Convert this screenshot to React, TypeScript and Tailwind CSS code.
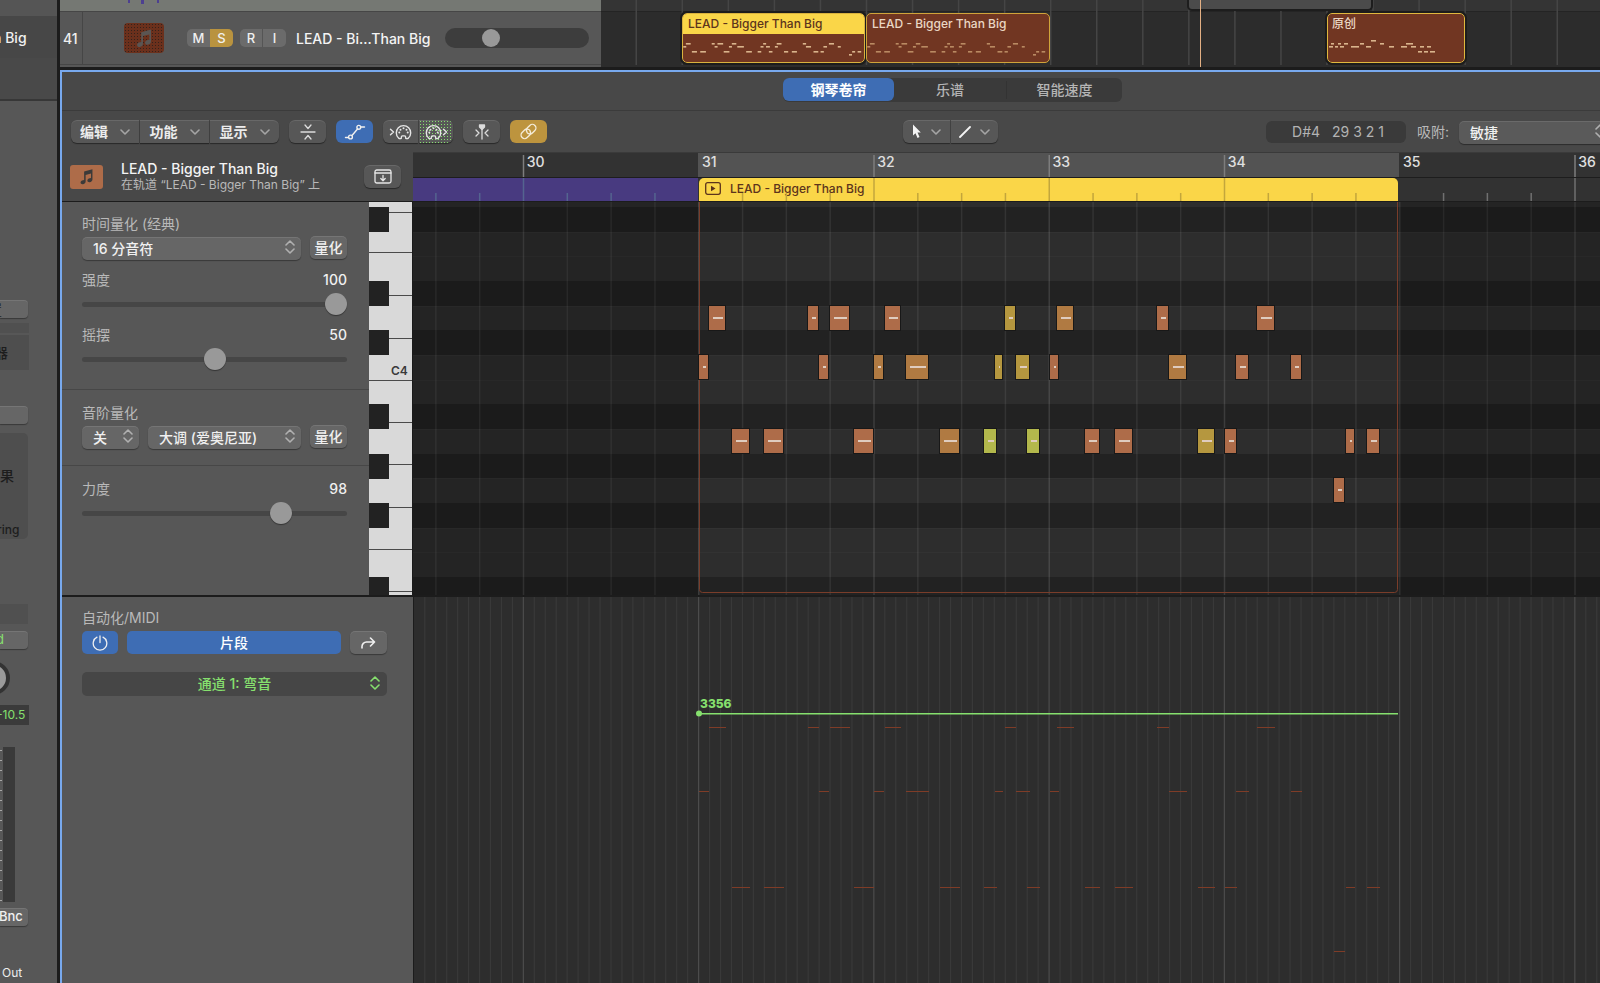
import React from 'react';

const BAR = 175.25;
const BEAT = BAR / 4;
const REGION_X = 285;
const REGION_W = 701;

type Note = { x: number; w: number; row: 0 | 1 | 2 | 3; tone?: 'amber' | 'gold' | 'lime' };

const NOTES: Note[] = [
  { x: 11, w: 16, row: 0 },
  { x: 110, w: 10, row: 0 },
  { x: 132, w: 19, row: 0 },
  { x: 187, w: 15, row: 0 },
  { x: 307, w: 10, row: 0, tone: 'gold' },
  { x: 359, w: 16, row: 0, tone: 'amber' },
  { x: 459, w: 11, row: 0 },
  { x: 559, w: 17, row: 0 },
  { x: 1, w: 9, row: 1 },
  { x: 121, w: 9, row: 1 },
  { x: 176, w: 9, row: 1, tone: 'amber' },
  { x: 208, w: 22, row: 1, tone: 'amber' },
  { x: 297, w: 7, row: 1, tone: 'gold' },
  { x: 318, w: 13, row: 1, tone: 'gold' },
  { x: 352, w: 8, row: 1 },
  { x: 471, w: 17, row: 1, tone: 'amber' },
  { x: 538, w: 12, row: 1 },
  { x: 593, w: 10, row: 1 },
  { x: 34, w: 17, row: 2 },
  { x: 66, w: 19, row: 2 },
  { x: 156, w: 19, row: 2 },
  { x: 242, w: 19, row: 2, tone: 'amber' },
  { x: 286, w: 12, row: 2, tone: 'lime' },
  { x: 329, w: 12, row: 2, tone: 'lime' },
  { x: 387, w: 14, row: 2 },
  { x: 417, w: 17, row: 2 },
  { x: 500, w: 16, row: 2, tone: 'gold' },
  { x: 527, w: 11, row: 2 },
  { x: 648, w: 8, row: 2 },
  { x: 669, w: 12, row: 2 },
  { x: 636, w: 10, row: 3 },
];

const NOTE_TOP = [104, 153, 227, 276];
const AUTO_Y = [130, 194, 290, 354];
const MINI_Y = [29, 32, 37, 40];
const TONES = { base: '#ae6c49', amber: '#b07a42', gold: '#b5973f', lime: '#b3b84c' };

const ORIGINAL: [number, number, number][] = [
  [4, 3, 29], [11, 3, 29], [17, 4, 29], [33, 4, 29], [53, 4, 29], [79, 7, 29], [44, 5, 26],
  [2, 4, 32], [8, 3, 32], [13, 4, 32], [24, 8, 32], [39, 5, 32], [62, 5, 32], [74, 6, 32],
  [84, 5, 32], [93, 4, 32], [100, 4, 32], [91, 4, 37], [97, 4, 37], [103, 5, 37],
];

// true marks a sharp, from the top of the roll down
const ROWS = [true, false, false, true, false, true, false, false, true, false, true, false, true, false, false, true];
const rowY = (i: number) => Math.round(5 + i * 24.67);

function Chevron({ className = '' }: { className?: string }) {
  return (
    <svg viewBox="0 0 10 6" className={`h-[6px] w-[10px] ${className}`} fill="none" stroke="currentColor" strokeWidth="1.6" strokeLinecap="round" strokeLinejoin="round" aria-hidden="true">
      <path d="M1 1l4 4 4-4" />
    </svg>
  );
}

function UpDown({ className = '' }: { className?: string }) {
  return (
    <svg viewBox="0 0 10 14" className={`pointer-events-none absolute h-[14px] w-[10px] ${className}`} fill="none" stroke="currentColor" strokeWidth="1.6" strokeLinecap="round" strokeLinejoin="round" aria-hidden="true">
      <path d="M1 5l4-4 4 4M1 9l4 4 4-4" />
    </svg>
  );
}

function MusicNote({ className = '' }: { className?: string }) {
  return (
    <svg viewBox="0 0 20 20" className={className} fill="currentColor" aria-hidden="true">
      <path d="M7.2 4.2L17 1.4v12.1c0 1.7-1.5 3-3.2 3.2-1.600.2-2.800-.7-2.800-2 0-1.400 1.300-2.500 2.900-2.700l1.400-.2V6.400L9 8.100v7.700c0 1.700-1.500 3-3.200 3.200-1.600.2-2.800-.7-2.800-2 0-1.400 1.300-2.500 2.900-2.700l1.300-.2z" />
    </svg>
  );
}

function MidiPlug({ out = false }: { out?: boolean }) {
  return (
    <svg viewBox="0 0 24 18" className={out ? 'h-[18px] w-[24px] -scale-x-100' : 'h-[18px] w-[24px]'} fill="none" stroke="#e6e6e6" strokeWidth="1.4" strokeLinecap="round" strokeLinejoin="round" aria-hidden="true">
      <path d={out ? 'M4.500 6.200L1.500 9l3 2.800' : 'M1.500 6.200L4.500 9l-3 2.800'} />
      <path d="M12.300 15.300c-.9.500-1.900.4-2.700-.2A7.200 7.200 0 1 1 19.400 15.100c-.8.600-1.800.7-2.700.2v-1.100c0-.8-.5-1.300-1.200-1.300h-2c-.7 0-1.200.5-1.200 1.300z" />
      <g fill="#e6e6e6" stroke="none">
        <circle cx="10.300" cy="9.600" r="1" />
        <circle cx="11.500" cy="6.700" r="1" />
        <circle cx="14.500" cy="5.300" r="1" />
        <circle cx="17.500" cy="6.700" r="1" />
        <circle cx="18.700" cy="9.600" r="1" />
      </g>
    </svg>
  );
}

const GREY_BTN = 'flex shrink-0 items-center justify-center bg-[#575757] shadow-[0_1px_1px_rgba(0,0,0,0.45),inset_0_1px_0_rgba(255,255,255,0.1)]';
const PANEL_BTN = 'bg-[#666666] shadow-[0_1px_1px_rgba(0,0,0,0.35),inset_0_1px_0_rgba(255,255,255,0.1)]';

function MenuButton({ label, className = '' }: { label: string; className?: string }) {
  return (
    <button type="button" className={`${GREY_BTN} h-[23px] gap-3 text-[14px] font-bold text-[#ececec] ${className}`}>
      {label}
      <Chevron className="text-[#a5a5a5]" />
    </button>
  );
}

function Select({ label, value, className, tone }: { label: string; value: string; className: string; tone?: string }) {
  return (
    <div className={`relative ${className}`}>
      <select
        aria-label={label}
        defaultValue={value}
        className={`h-[23px] w-full appearance-none rounded-[5px] pl-[11px] text-[14px] font-medium text-[#f0f0f0] outline-none ${tone ?? PANEL_BTN}`}
      >
        <option>{value}</option>
      </select>
      <UpDown className="right-[6px] top-[4px] text-[#b0b0b0]" />
    </div>
  );
}

function Slider({ id, label, value, display, max }: { id: string; label: string; value: number; display: string; max: number }) {
  return (
    <div>
      <div className="flex h-5 items-center justify-between text-[14px]">
        <label htmlFor={id} className="text-[#b9b9b9]">{label}</label>
        <output className="text-[14px] font-medium text-[#f0f0f0]">{display}</output>
      </div>
      <input
        id={id}
        type="range"
        min={0}
        max={max}
        defaultValue={value}
        className="mt-1 block h-[22px] w-full appearance-none bg-transparent [&::-webkit-slider-runnable-track]:h-[5px] [&::-webkit-slider-runnable-track]:rounded-full [&::-webkit-slider-runnable-track]:bg-[#464646] [&::-webkit-slider-thumb]:-mt-[9px] [&::-webkit-slider-thumb]:h-[22px] [&::-webkit-slider-thumb]:w-[22px] [&::-webkit-slider-thumb]:appearance-none [&::-webkit-slider-thumb]:rounded-full [&::-webkit-slider-thumb]:bg-[#999999] [&::-webkit-slider-thumb]:shadow-[0_1px_1px_rgba(0,0,0,0.4)]"
      />
    </div>
  );
}

function ChannelStrip() {
  return (
    <aside className="flex w-[57px] shrink-0 flex-col overflow-hidden bg-[#575757] text-[14px]">
      <div className="h-4 bg-[#555555]" />
      <div className="flex h-[42px] items-center bg-[#474747]">
        <span className="-ml-[7px] whitespace-pre text-[14px] font-medium text-[#f0f0f0]">n Big</span>
      </div>
      <div className="h-[43px] border-b-2 border-[#373737] bg-[#494949]" />
      <div className="flex w-[29px] flex-col">
        <button type="button" className={`mt-[199px] flex h-[18px] w-7 items-center justify-start rounded-r-[4px] text-[#222] ${PANEL_BTN}`}>
          <span className="-ml-[12px]">置</span>
        </button>
        <div className="mt-[5px] h-[10px] bg-[#505050]" />
        <div className="mt-[2px] flex h-[35px] items-center bg-[#4e4e4e] text-[#1d1d1d]">
          <span className="-ml-[6px] font-medium">器</span>
        </div>
        <button type="button" aria-label="Slot" className={`mt-[36px] h-[18px] w-7 rounded-r-[4px] ${PANEL_BTN}`} />
        <div className="mt-[9px] flex h-[106px] w-7 flex-col justify-between rounded-r-[5px] bg-[#4e4e4e] pt-[33px] text-[#1d1d1d]">
          <span className="-ml-[14px] w-8 whitespace-nowrap font-medium leading-5">效果</span>
          <span className="-ml-[3px] text-[12px] font-medium leading-[18px]">ring</span>
        </div>
        <div className="mt-[65px] h-[20px] w-7 bg-[#505050]" />
        <button type="button" className={`mt-[7px] flex h-[18px] w-7 items-center rounded-r-[4px] text-[13px] text-[#86e06e] ${PANEL_BTN}`}>
          <span className="-ml-[4px]">d</span>
        </button>
        <svg viewBox="0 0 29 36" className="mt-[11px] h-[36px] w-[29px]" aria-hidden="true">
          <circle cx="-7" cy="18" r="15" fill="#9a9a9a" stroke="#333333" strokeWidth="4" />
        </svg>
        <div className="mt-[9px] flex h-[20px] items-center bg-[#3b3b3b] text-[12px] text-[#86e06e]">
          <span className="-ml-[3px]">-10.5</span>
        </div>
        <div className="mt-[22px] flex h-[155px]">
          <svg className="h-full w-[3px]" aria-hidden="true">
            {Array.from({ length: 16 }, (_, i) => (
              <rect key={i} x="0" y={3 + i * 10} width="2" height="1" fill="#a8a8a8" />
            ))}
          </svg>
          <div className="w-3 bg-[#3a3a3a]" />
        </div>
        <button type="button" className={`mt-[6px] flex h-[18px] w-7 items-center rounded-r-[4px] text-[13px] font-medium text-[#f0f0f0] ${PANEL_BTN}`}>
          <span className="-ml-px">Bnc</span>
        </button>
        <span className="ml-[2px] mt-[37px] text-[12px] leading-5 text-[#ececec]">Out</span>
      </div>
    </aside>
  );
}

function MiniNotes({ dim = false }: { dim?: boolean }) {
  return (
    <svg className="pointer-events-none absolute inset-0 h-full w-full" aria-hidden="true">
      {NOTES.map((n, i) => (
        <rect key={i} x={n.x * 0.261} y={MINI_Y[n.row]} width={Math.max(3, n.w * 0.3)} height="1.600" fill={dim ? '#b98a62' : '#d9b48c'} />
      ))}
    </svg>
  );
}

function Tracks() {
  return (
    <section className="flex h-[67px]">
      <div className="w-[541px] shrink-0 bg-[#575757]">
        <div className="h-3 border-b border-[#464646] bg-[#757873]">
          <svg className="h-[4px] w-[160px]" fill="#4d4090" aria-hidden="true">
            <rect x="68" width="2" height="3" />
            <rect x="81" width="3" height="4" />
            <rect x="97" width="2" height="3" />
          </svg>
        </div>
        <div className="flex h-[53px] items-center border-b border-[#464646]">
          <div className="flex h-full w-[23px] items-center border-r border-[#464646] pl-[3px] text-[14px] font-medium text-[#f0f0f0]">
            41
          </div>
          <div className="ml-[41px] flex h-[30px] w-10 items-center justify-center rounded-[4px] bg-[#6b301c] bg-[radial-gradient(#33221c_0.7px,transparent_0.9px)] bg-[size:3px_3px]">
            <MusicNote className="h-[20px] w-[20px] text-[#5a5553]" />
          </div>
          <div className="ml-[23px] flex overflow-hidden rounded-[5px] text-[13px] font-medium text-[#f0f0f0]">
            <button type="button" className="h-[18px] w-[23px] bg-[#6b6b6b]">M</button>
            <button type="button" className="h-[18px] w-[23px] bg-[#b9933f]">S</button>
          </div>
          <div className="ml-[7px] flex overflow-hidden rounded-[5px] text-[13px] font-medium text-[#f0f0f0]">
            <button type="button" className="h-[18px] w-[23px] border-r border-[#555555] bg-[#6b6b6b]">R</button>
            <button type="button" className="h-[18px] w-[23px] bg-[#6b6b6b]">I</button>
          </div>
          <span className="ml-[10px] w-[138px] whitespace-nowrap text-[14px] font-medium text-[#f4f4f4]">LEAD - Bi…Than Big</span>
          <input
            type="range"
            aria-label="音量"
            min={0}
            max={100}
            defaultValue={29}
            className="ml-[11px] h-5 w-[144px] appearance-none rounded-full bg-[#3d3d3d] px-px [&::-webkit-slider-thumb]:h-[18px] [&::-webkit-slider-thumb]:w-[18px] [&::-webkit-slider-thumb]:appearance-none [&::-webkit-slider-thumb]:rounded-full [&::-webkit-slider-thumb]:bg-[#999999]"
          />
        </div>
      </div>
      <div className="relative flex-1 overflow-hidden bg-[#2c2c2c]">
        <div className="h-3 border-b border-[#242424] bg-[#343434]" />
        <svg className="absolute inset-0 h-[65px] w-full" aria-hidden="true">
          {Array.from({ length: 24 }, (_, i) => (
            <rect key={i} x={34.500 + i * 46.050} y="0" width="1.500" height="65" fill="#454545" />
          ))}
        </svg>
        <div className="absolute left-[586px] top-0 h-[11px] w-[186px] rounded-b-[5px] border-2 border-t-0 border-[#1d1d1d] bg-[#4b4b4b]" />
        <div className="absolute left-[81px] top-[13px] h-[50px] w-[183px] overflow-hidden rounded-[5px] border border-[#d9b23e] bg-[#713622] outline-2 outline-[#1c1c1c]">
          <div className="flex h-5 items-center bg-[#fad648] pl-[5px] text-[12px] font-medium text-[#5c341c]">LEAD - Bigger Than Big</div>
          <MiniNotes />
        </div>
        <div className="absolute left-[265px] top-[13px] h-[50px] w-[184px] overflow-hidden rounded-[5px] border border-[#d0a43a] bg-[#713622]">
          <div className="flex h-5 items-center pl-[5px] text-[12px] font-medium text-[#ead6c4]">LEAD - Bigger Than Big</div>
          <MiniNotes dim />
        </div>
        <div className="absolute left-[726px] top-[13px] h-[50px] w-[138px] overflow-hidden rounded-[5px] border border-[#e0b83e] bg-[#713622] outline-2 outline-[#1c1c1c]">
          <div className="flex h-5 items-center pl-[4px] text-[12px] font-medium text-[#ead6c4]">原创</div>
          <svg className="pointer-events-none absolute inset-0 h-full w-full" aria-hidden="true">
            {ORIGINAL.map(([x, w, y], i) => (
              <rect key={i} x={x - 1} y={y} width={w} height="1.600" fill="#d9b48c" />
            ))}
          </svg>
        </div>
        <div className="absolute left-[599px] top-0 h-full w-px bg-[#e3b084]" />
      </div>
    </section>
  );
}

function Toolbar() {
  return (
    <div className="flex h-[41px] shrink-0 items-center pl-[9px]">
      <div className="flex gap-px">
        <MenuButton label="编辑" className="w-[68px] rounded-l-[6px]" />
        <MenuButton label="功能" className="w-[69px]" />
        <MenuButton label="显示" className="w-[69px] rounded-r-[6px]" />
      </div>
      <button type="button" aria-label="Collapse" className={`${GREY_BTN} ml-[10px] h-[23px] w-[37px] rounded-[6px]`}>
        <svg viewBox="0 0 18 18" className="h-[18px] w-[18px]" fill="none" stroke="#dcdcdc" strokeWidth="1.300" strokeLinecap="round" strokeLinejoin="round">
          <path d="M2 9h14M6 2l3 3.500L12 2M6 16l3-3.500L12 16" />
        </svg>
      </button>
      <button type="button" aria-label="Automation" className="ml-[10px] flex h-[23px] w-[37px] shrink-0 items-center justify-center rounded-[6px] bg-[#3e6db4]">
        <svg viewBox="0 0 22 16" className="h-[16px] w-[22px]" fill="none" stroke="#f0f0f0" strokeWidth="1.400" strokeLinecap="round">
          <path d="M1.500 13.500h3M8 11.500l5.500-6.500M16.500 3h4" />
          <circle cx="6.500" cy="13" r="1.900" />
          <circle cx="14.800" cy="3.300" r="1.900" />
        </svg>
      </button>
      <div className="ml-[10px] flex shrink-0 gap-px">
        <button type="button" aria-label="MIDI in" className={`${GREY_BTN} h-[23px] w-[35px] rounded-l-[6px]`}>
          <MidiPlug />
        </button>
        <button type="button" aria-label="MIDI out" className={`${GREY_BTN} h-[23px] w-[34px] rounded-r-[6px] bg-[radial-gradient(#86e06e_0.6px,transparent_0.9px)] bg-[size:3px_3px]`}>
          <MidiPlug out />
        </button>
      </div>
      <button type="button" aria-label="Catch playhead" className={`${GREY_BTN} ml-[10px] h-[23px] w-[37px] rounded-[6px]`}>
        <svg viewBox="0 0 18 18" className="h-[18px] w-[18px]" fill="none" stroke="#dcdcdc" strokeWidth="1.300" strokeLinecap="round" strokeLinejoin="round">
          <path d="M3 7l3 3-3 3M15 7l-3 3 3 3M9 5v11" />
          <path d="M6.500 2h5v2L9 6.500 6.500 4z" fill="#dcdcdc" />
        </svg>
      </button>
      <button type="button" aria-label="Link" className="ml-[10px] flex h-[23px] w-[37px] shrink-0 items-center justify-center rounded-[6px] bg-[#bd943e]">
        <svg viewBox="0 0 24 24" className="h-[17px] w-[17px]" fill="none" stroke="#f4ecd9" strokeWidth="1.900" strokeLinecap="round" strokeLinejoin="round">
          <path d="M10 13.500a5 5 0 0 0 7.500.5l3.500-3.500a5 5 0 0 0-7.100-7.100l-3.400 3.400a5 5 0 0 0-.6 6.200" />
          <path d="M14 10.500a5 5 0 0 0-7.500-.5L3 13.500a5 5 0 0 0 7.100 7.100l3.400-3.400a5 5 0 0 0 .6-6.200" />
        </svg>
      </button>
      <div className="ml-[356px] flex shrink-0 gap-px">
        <button type="button" aria-label="Pointer tool" className={`${GREY_BTN} h-[23px] w-[47px] gap-[9px] rounded-l-[6px]`}>
          <svg viewBox="0 0 10 15" className="h-[15px] w-[10px]" fill="#f4f4f4">
            <path d="M1 0.500v11l2.500-2.300L5.500 14l2-.9-2-4.600h3.300z" />
          </svg>
          <Chevron className="text-[#a5a5a5]" />
        </button>
        <button type="button" aria-label="Pencil tool" className={`${GREY_BTN} h-[23px] w-[47px] gap-[9px] rounded-r-[6px]`}>
          <svg viewBox="0 0 12 12" className="h-[12px] w-[12px]" stroke="#f4f4f4" strokeWidth="1.800" strokeLinecap="round">
            <path d="M1 11L11 1" />
          </svg>
          <Chevron className="text-[#a5a5a5]" />
        </button>
      </div>
      <div className="ml-[268px] flex h-[22px] w-[140px] shrink-0 items-center justify-center gap-[12px] rounded-[6px] bg-[#3a3a3a] pl-1 text-[14px] text-[#b3b3b3]">
        <span>D#4</span>
        <span>29 3 2 1</span>
      </div>
      <span className="ml-[11px] w-[42px] shrink-0 text-[14px] text-[#b9b9b9]">吸附:</span>
      <Select
        label="吸附"
        value="敏捷"
        className="w-[152px] shrink-0"
        tone="bg-[#5a5a5a] shadow-[0_1px_1px_rgba(0,0,0,0.4),inset_0_1px_0_rgba(255,255,255,0.1)]"
      />
    </div>
  );
}

function Ruler() {
  return (
    <div className="relative h-[49px] flex-1 overflow-hidden border-t border-[#3a3a3a] bg-[#323232]">
      <div className="absolute left-[285px] top-0 h-6 w-[701px] bg-[#535353]" />
      <div className="absolute inset-x-0 top-6 h-[25px] border-t border-[#1d1d1d]" />
      <div className="absolute left-0 top-[25px] h-6 w-[285px] bg-[#483a80]" />
      <div className="absolute left-[286px] top-[25px] flex h-6 w-[699px] items-center rounded-t-[5px] bg-[#fad648] pb-[3px] pl-[6px] text-[12px] font-medium text-[#5c341c]">
        <svg viewBox="0 0 16 13" className="mr-[9px] h-[13px] w-[16px]" fill="none" stroke="#5c341c" strokeWidth="1.300" aria-hidden="true">
          <rect x="0.700" y="0.700" width="14.600" height="11.600" rx="2" />
          <path d="M6 3.800v5.400l4.500-2.700z" fill="#5c341c" stroke="none" />
        </svg>
        LEAD - Bigger Than Big
      </div>
      <svg className="absolute inset-0 h-full w-full" aria-hidden="true">
        {Array.from({ length: 28 }, (_, k) => {
          const i = k - 6;
          const x = REGION_X + i * BEAT;
          const inside = i > 0 && i < 16;
          const bar = i % 4 === 0;
          const fill = inside ? '#c3a63c' : i < 0 ? '#54648f' : '#707070';
          return (
            <g key={i}>
              {bar && i !== 0 && i !== 16 && <rect x={x} y="2" width="1.500" height="22" fill="#7d7d7d" />}
              {i !== 0 && i !== 16 && <rect x={x} y={bar ? 25 : 40} width="1.500" height="26" fill={fill} />}
            </g>
          );
        })}
      </svg>
      {[30, 31, 32, 33, 34, 35, 36].map((n) => (
        <span key={n} className="absolute top-0 text-[14px] font-medium leading-[18px] text-[#e0e0e0]" style={{ left: REGION_X + (n - 31) * BAR + 4 }}>
          {n}
        </span>
      ))}
    </div>
  );
}

function Keyboard() {
  const seams = [10, 50, 93, 136, 178, 220, 262, 305, 347, 389];
  return (
    <svg className="h-[393px] w-[44px] shrink-0" aria-label="Keyboard">
      <rect width="43" height="393" fill="#d9d9d9" />
      {seams.map((y) => (
        <rect key={y} x="0" y={y} width="43" height="1" fill="#4a4a4a" />
      ))}
      {ROWS.map((sharp, i) => sharp && <rect key={i} x="0" y={rowY(i)} width="20" height="25" fill="#222222" />)}
      <rect x="43" width="1" height="393" fill="#1a1a1a" />
      <text x="22" y="173" fontSize="12" fontWeight="600" fill="#3a3a3a">C4</text>
    </svg>
  );
}

function PianoRoll() {
  return (
    <div className="relative h-[393px] flex-1 overflow-hidden bg-[#2d2d2d]">
      <svg className="absolute inset-0 h-full w-full" aria-hidden="true">
        {ROWS.map((sharp, i) => (
          <rect key={i} x="0" y={rowY(i)} width="100%" height={sharp ? 25 : 1} fill={sharp ? '#222222' : '#323232'} />
        ))}
        {Array.from({ length: 28 }, (_, k) => {
          const i = k - 6;
          return <rect key={i} x={REGION_X + i * BEAT} y="0" width="1.500" height="100%" fill="#ffffff" fillOpacity={i % 4 === 0 ? 0.12 : 0.08} />;
        })}
        <rect x="0" y="0" width={REGION_X} height="100%" fill="#000000" fillOpacity="0.200" />
        <rect x={REGION_X + REGION_W} y="0" width="100%" height="100%" fill="#000000" fillOpacity="0.200" />
        <path d="M286.500 0v387.500q0 3 3 3h692q3 0 3-3V0" fill="none" stroke="#7a3d2a" strokeWidth="1" />
      </svg>
      {NOTES.map((n, i) => (
        <div
          key={i}
          className="absolute h-[24px] outline-1 outline-[#181818]"
          style={{ left: REGION_X + n.x, top: NOTE_TOP[n.row], width: n.w, background: TONES[n.tone ?? 'base'] }}
        >
          <div className="ml-[4px] mt-[11px] mr-[2px] h-[2px] bg-[#dfccbf]" />
        </div>
      ))}
    </div>
  );
}

function AutomationLane() {
  return (
    <div className="relative flex-1 overflow-hidden border-l border-[#1c1c1c] bg-[#2d2d2d]">
      <svg className="absolute inset-0 h-full w-full" aria-hidden="true">
        {Array.from({ length: 109 }, (_, k) => {
          const i = k - 25;
          return <rect key={i} x={REGION_X - 1 + i * (BAR / 16)} y="0" width="1.200" height="100%" fill={i % 16 === 0 ? '#4c4c4c' : '#393939'} />;
        })}
        {NOTES.map((n, i) => (
          <rect key={i} x={REGION_X + n.x - 1} y={AUTO_Y[n.row]} width={n.w + 1} height="1" fill="#7f3c27" />
        ))}
        <rect x={REGION_X} y="116" width={REGION_W - 2} height="1.500" fill="#86e06e" />
        <circle cx={REGION_X} cy="116.500" r="3" fill="#86e06e" />
      </svg>
      <span className="absolute left-[286px] top-[99px] text-[12px] font-extrabold leading-4 text-[#86e06e]">3356</span>
    </div>
  );
}

function Inspector() {
  return (
    <div className="flex-1 bg-[#575757]">
      <div className="border-b border-[#474747] pb-[19px] pl-5 pr-[22px] pt-[11px]">
        <div className="flex h-5 items-center text-[14px] text-[#b9b9b9]">时间量化 (经典)</div>
        <div className="mb-[9px] mt-[3px] flex gap-[9px]">
          <Select label="时间量化" value="16 分音符" className="flex-1" />
          <button type="button" className={`h-[23px] w-[37px] rounded-[5px] text-[14px] font-medium text-[#f0f0f0] ${PANEL_BTN}`}>量化</button>
        </div>
        <Slider id="strength" label="强度" value={100} display="100" max={100} />
        <div className="h-[9px]" />
        <Slider id="swing" label="摇摆" value={50} display="50" max={100} />
      </div>
      <div className="border-b border-[#474747] pb-[16px] pl-5 pr-[22px] pt-[12px]">
        <div className="flex h-5 items-center text-[14px] text-[#b9b9b9]">音阶量化</div>
        <div className="mt-[3px] flex gap-[9px]">
          <Select label="音阶" value="关" className="w-[57px]" />
          <Select label="调式" value="大调 (爱奥尼亚)" className="flex-1" />
          <button type="button" className={`h-[23px] w-[37px] rounded-[5px] text-[14px] font-medium text-[#f0f0f0] ${PANEL_BTN}`}>量化</button>
        </div>
      </div>
      <div className="pl-5 pr-[22px] pt-[12px]">
        <Slider id="velocity" label="力度" value={98} display="98" max={127} />
      </div>
    </div>
  );
}

function Editor() {
  return (
    <section className="flex min-w-0 flex-1 flex-col overflow-hidden border-l-2 border-t-2 border-[#78a9ee] bg-[#484848]">
      <div className="flex h-[39px] shrink-0 items-center border-b border-[#3b3b3b] pb-[3px] pl-[721px]">
        <div className="flex h-6 items-center rounded-[6px] bg-[#3a3a3a] text-[14px] font-medium text-[#b5b5b5]">
          <button type="button" className="h-[23px] w-[111px] rounded-[6px] bg-[#3e6db4] font-bold text-white">钢琴卷帘</button>
          <button type="button" className="h-[23px] w-[112px]">乐谱</button>
          <button type="button" className="h-[18px] w-[116px] border-l border-[#333333] leading-[18px]">智能速度</button>
        </div>
      </div>
      <Toolbar />
      <div className="flex h-[49px] shrink-0">
        <div className="flex w-[351px] shrink-0 items-center pl-2 pr-3">
          <div className="flex h-[24px] w-[33px] items-center justify-center rounded-[3px] bg-[#ae6c49]">
            <MusicNote className="h-[17px] w-[17px] text-[#3c3a39]" />
          </div>
          <div className="ml-[18px] flex-1 whitespace-nowrap">
            <div className="text-[14px] font-medium leading-[17px] text-[#f4f4f4]">LEAD - Bigger Than Big</div>
            <div className="text-[12px] leading-[16px] text-[#b9b9b9]">在轨道 “LEAD - Bigger Than Big” 上</div>
          </div>
          <button type="button" aria-label="Show region" className={`${GREY_BTN} h-[23px] w-[37px] rounded-[6px]`}>
            <svg viewBox="0 0 18 15" className="h-[15px] w-[18px]" fill="none" stroke="#e6e6e6" strokeWidth="1.300" strokeLinecap="round" strokeLinejoin="round">
              <rect x="1" y="1" width="16" height="13" rx="1.800" />
              <path d="M1 4h16M9 6.500v5M6.800 9.500L9 11.700l2.200-2.200" />
            </svg>
          </button>
        </div>
        <Ruler />
      </div>
      <div className="flex shrink-0 border-b-2 border-t border-[#1c1c1c]">
        <div className="flex w-[351px] shrink-0">
          <Inspector />
          <Keyboard />
        </div>
        <PianoRoll />
      </div>
      <div className="flex flex-1">
        <div className="w-[351px] shrink-0 bg-[#575757] pl-5 pr-[26px] pt-[10px]">
          <div className="flex h-5 items-center text-[14px] text-[#b9b9b9]">自动化/MIDI</div>
          <div className="mt-[4px] flex gap-[9px]">
            <button type="button" aria-label="Power" className="flex h-[23px] w-[36px] items-center justify-center rounded-[5px] bg-[#3e6db4]">
              <svg viewBox="0 0 16 16" className="h-[16px] w-[16px]" fill="none" stroke="#f0f0f0" strokeWidth="1.300" strokeLinecap="round">
                <path d="M8 1v6.500M5 2.200a6.800 6.800 0 1 0 6 0" />
              </svg>
            </button>
            <button type="button" className="h-[23px] flex-1 rounded-[5px] bg-[#3e6db4] text-[14px] font-medium text-white">片段</button>
            <button type="button" aria-label="Forward" className={`flex h-[23px] w-[37px] items-center justify-center rounded-[5px] ${PANEL_BTN}`}>
              <svg viewBox="0 0 15 12" className="h-[12px] w-[15px]" fill="none" stroke="#f0f0f0" strokeWidth="1.600" strokeLinecap="round" strokeLinejoin="round">
                <path d="M1 11V9.500a4.500 4.500 0 0 1 4.500-4.500H13.500M9.500 1l4 4-4 4" />
              </svg>
            </button>
          </div>
          <div className="relative mt-[17px]">
            <select aria-label="通道" className="h-6 w-full appearance-none rounded-[5px] bg-[#464646] text-center text-[14px] font-medium text-[#86e06e] [text-align-last:center]">
              <option>通道 1: 弯音</option>
            </select>
            <UpDown className="right-[7px] top-[5px] text-[#86e06e]" />
          </div>
        </div>
        <AutomationLane />
      </div>
    </section>
  );
}

export default function App() {
  return (
    <main className="flex min-h-screen overflow-hidden bg-[#1c1c1c] font-['Inter','Noto_Sans_CJK_SC',sans-serif]">
      <ChannelStrip />
      <div className="ml-[3px] flex min-w-0 flex-1 flex-col">
        <Tracks />
        <div className="mt-[3px] flex min-w-0 flex-1">
          <Editor />
        </div>
      </div>
    </main>
  );
}
